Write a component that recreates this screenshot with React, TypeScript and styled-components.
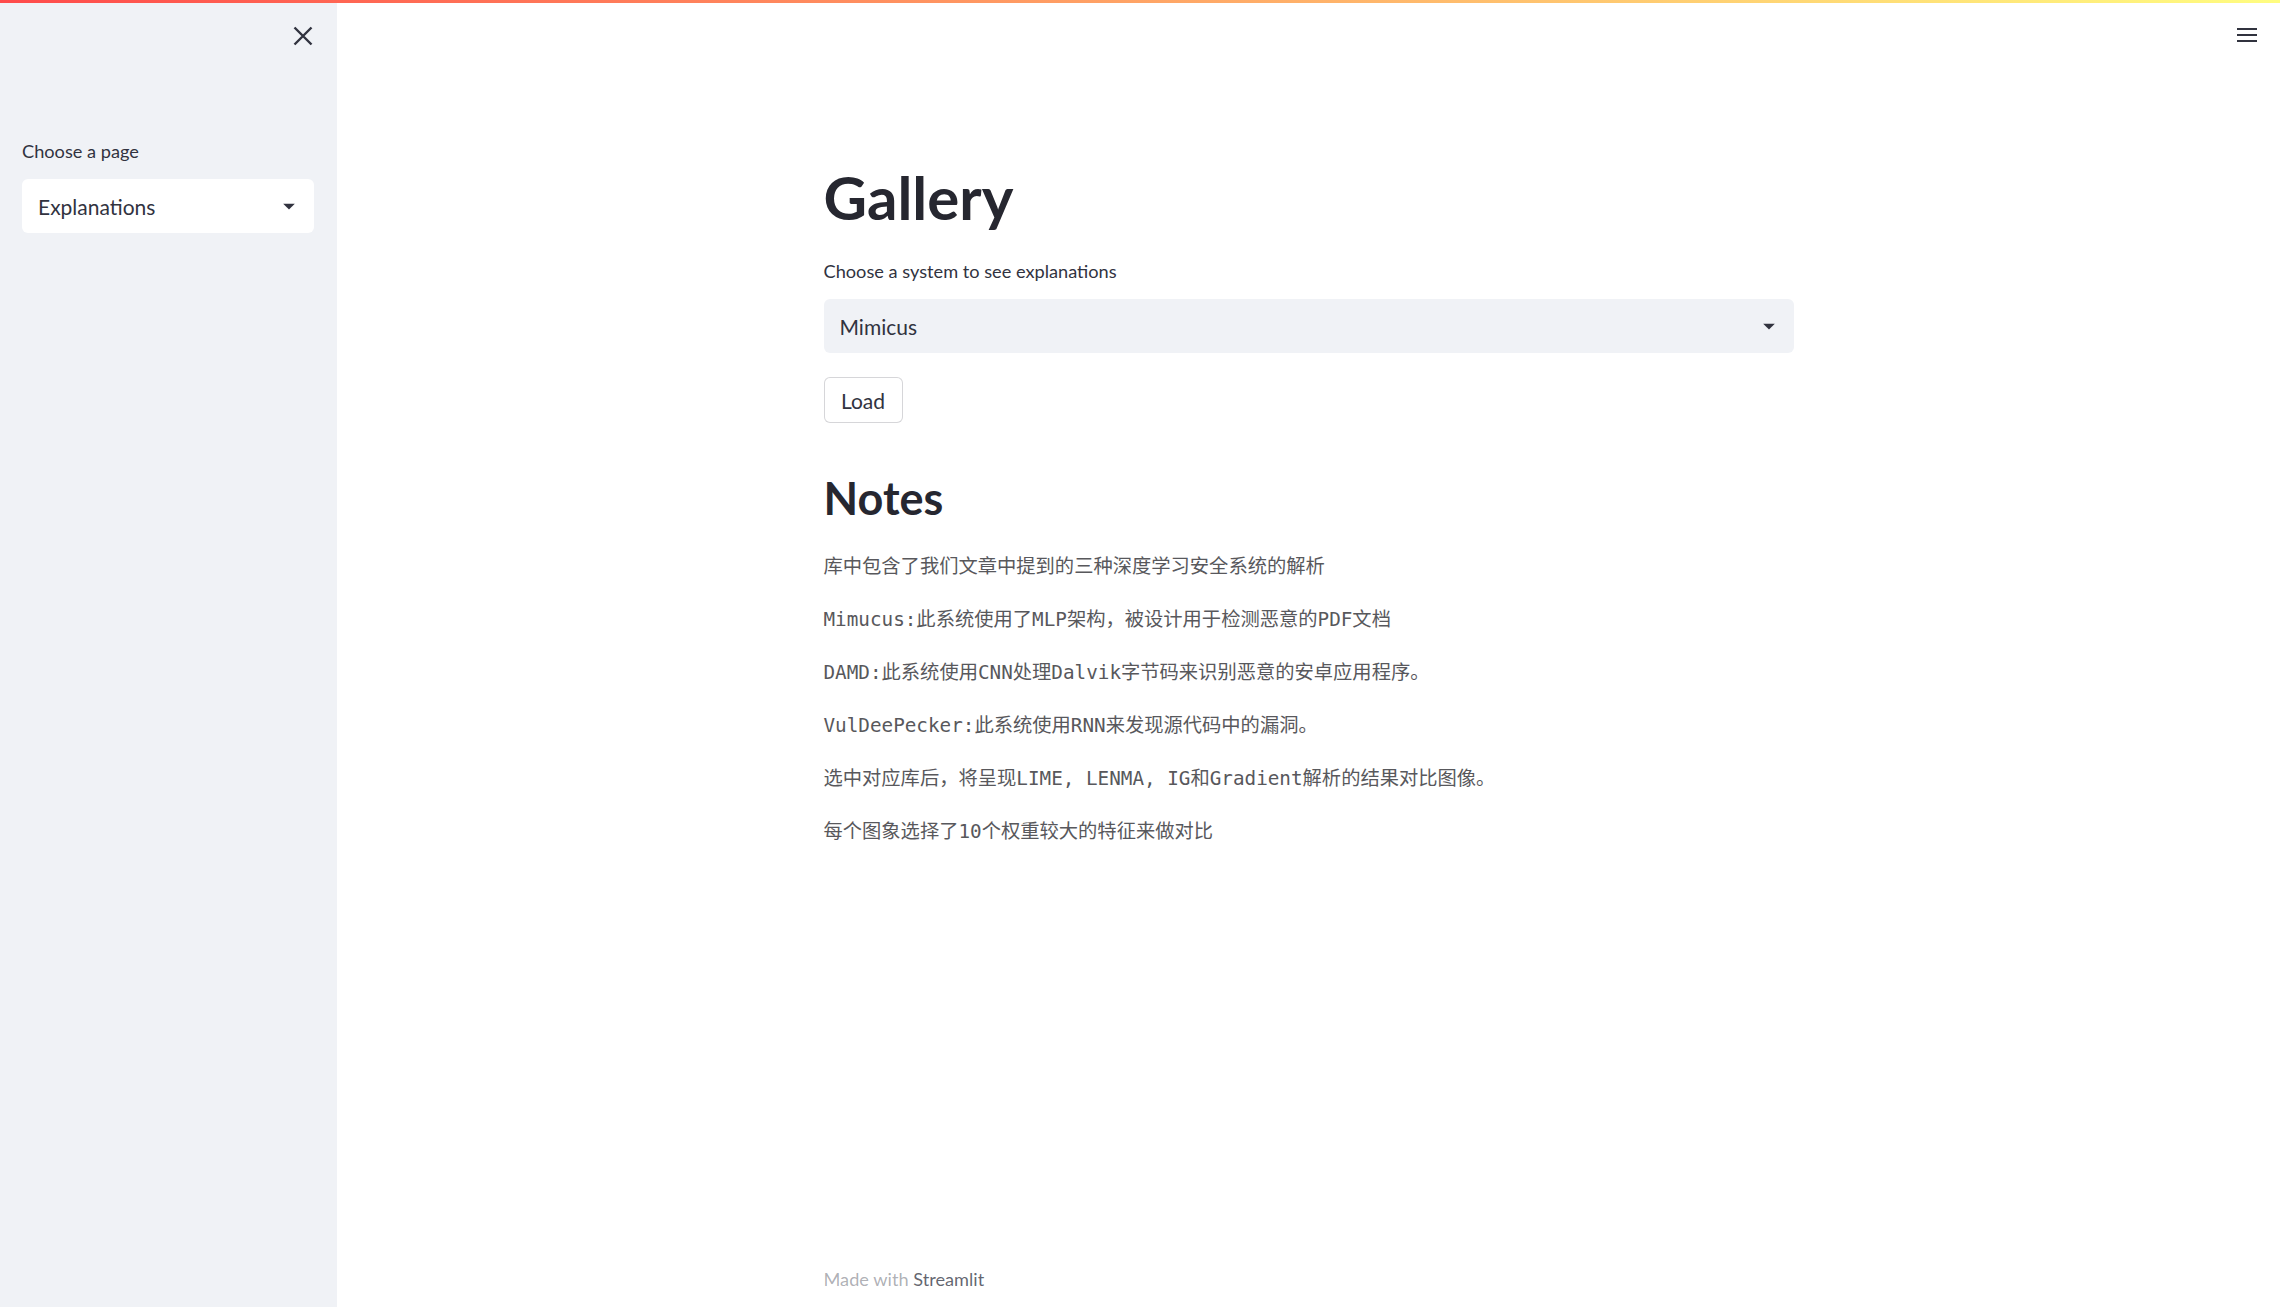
import React from "react";
import styled, { createGlobalStyle } from "styled-components";

const GlobalStyle = createGlobalStyle`
  html, body {
    margin: 0;
    padding: 0;
    background: #ffffff;
  }
  body {
    font-family: Lato, "Noto Sans", sans-serif;
    color: rgb(49, 51, 63);
  }
  * { box-sizing: border-box; }
`;

const Page = styled.div`
  display: flex;
  min-height: 100vh;
  height: 1307px;
  position: relative;
`;

const Decoration = styled.div`
  position: absolute;
  top: 0;
  left: 0;
  right: 0;
  height: 3px;
  background: linear-gradient(90deg, rgb(255, 75, 75), rgb(255, 253, 128));
  z-index: 5;
`;

const Sidebar = styled.aside`
  width: 337px;
  flex: 0 0 337px;
  background: #f0f2f6;
  display: flex;
  flex-direction: column;
  padding: 0 23px 0 22px;
`;

const CloseRow = styled.div`
  display: flex;
  justify-content: flex-end;
  padding: 19px 0 0 0;
  margin-right: -6px;
`;

const IconButton = styled.button`
  border: none;
  background: transparent;
  padding: 0;
  width: 34px;
  height: 34px;
  display: flex;
  align-items: center;
  justify-content: center;
  color: rgb(49, 51, 63);
  cursor: pointer;
`;

const Label = styled.div<{ $top: number }>`
  font-family: Lato, "Noto Sans", sans-serif;
  font-size: 18.2px;
  line-height: 28px;
  color: rgb(49, 51, 63);
  margin-top: ${(p) => p.$top}px;
  margin-bottom: 14px;
`;

const Select = styled.div<{ $light?: boolean }>`
  height: 54px;
  border-radius: 6px;
  background: ${(p) => (p.$light ? "#ffffff" : "#f0f2f6")};
  display: flex;
  align-items: center;
  justify-content: space-between;
  padding: 0 11px 0 16px;
  font-family: Lato, "Noto Sans", sans-serif;
  font-size: 21px;
  color: rgb(49, 51, 63);
`;

const Caret = () => (
  <svg width="28" height="28" viewBox="0 0 24 24" fill="rgb(49,51,63)">
    <path d="M7 10l5 5 5-5z" />
  </svg>
);

const Main = styled.main`
  flex: 1;
  display: flex;
  flex-direction: column;
  align-items: center;
`;

const Header = styled.header`
  align-self: stretch;
  height: 70px;
  display: flex;
  align-items: center;
  justify-content: flex-end;
  padding-right: 23px;
`;

const Content = styled.section`
  width: 970px;
  display: flex;
  flex-direction: column;
  margin-top: 91px;
`;

const Title = styled.h1`
  margin: 0;
  font-family: Lato, "Noto Sans", sans-serif;
  font-weight: 700;
  font-size: 60px;
  line-height: 72px;
  color: rgb(38, 39, 48);
`;

const SubTitle = styled.h2`
  margin: 49px 0 26px 0;
  font-family: Lato, "Noto Sans", sans-serif;
  font-weight: 700;
  font-size: 45px;
  line-height: 53px;
  color: rgb(38, 39, 48);
`;

const Button = styled.button`
  align-self: flex-start;
  margin-top: 24px;
  height: 46px;
  width: 79px;
  border: 1px solid rgba(49, 51, 63, 0.2);
  border-radius: 6px;
  background: #ffffff;
  font-family: Lato, "Noto Sans", sans-serif;
  font-size: 21px;
  color: rgb(49, 51, 63);
  padding: 0;
`;

const Notes = styled.div`
  display: flex;
  flex-direction: column;
  gap: 21px;
`;

const Para = styled.p`
  margin: 0;
  font-family: "DejaVu Sans Mono", "Noto Sans CJK SC", monospace;
  font-size: 19.3px;
  line-height: 32px;
  color: #58585c;
`;

const Footer = styled.footer`
  width: 970px;
  margin-top: auto;
  margin-bottom: 14px;
  font-family: Lato, "Noto Sans", sans-serif;
  font-size: 18.2px;
  line-height: 28px;
  color: rgba(49, 51, 63, 0.4);
`;

const FooterLink = styled.span`
  color: rgba(49, 51, 63, 0.75);
`;

const notes = [
  "库中包含了我们文章中提到的三种深度学习安全系统的解析",
  "Mimucus:此系统使用了MLP架构，被设计用于检测恶意的PDF文档",
  "DAMD:此系统使用CNN处理Dalvik字节码来识别恶意的安卓应用程序。",
  "VulDeePecker:此系统使用RNN来发现源代码中的漏洞。",
  "选中对应库后，将呈现LIME, LENMA, IG和Gradient解析的结果对比图像。",
  "每个图象选择了10个权重较大的特征来做对比",
];

export default function App() {
  return (
    <>
      <GlobalStyle />
      <Page>
        <Decoration />
        <Sidebar>
          <CloseRow>
            <IconButton aria-label="Close sidebar">
              <svg width="34" height="34" viewBox="0 0 24 24" fill="none" stroke="rgb(49,51,63)" strokeWidth="1.7" strokeLinecap="butt">
                <path d="M18 6L6 18M6 6l12 12" />
              </svg>
            </IconButton>
          </CloseRow>
          <Label $top={84}>Choose a page</Label>
          <Select $light>
            <span>Explanations</span>
            <Caret />
          </Select>
        </Sidebar>
        <Main>
          <Header>
            <svg width="20" height="14" viewBox="0 0 20 14" fill="rgb(49,51,63)">
              <rect x="0" y="0" width="20" height="2" />
              <rect x="0" y="6" width="20" height="2" />
              <rect x="0" y="12" width="20" height="2" />
            </svg>
          </Header>
          <Content>
            <Title>Gallery</Title>
            <Label $top={24}>Choose a system to see explanations</Label>
            <Select>
              <span>Mimicus</span>
              <Caret />
            </Select>
            <Button>Load</Button>
            <SubTitle>Notes</SubTitle>
            <Notes>
              {notes.map((n) => (
                <Para key={n}>{n}</Para>
              ))}
            </Notes>
          </Content>
          <Footer>
            Made with <FooterLink>Streamlit</FooterLink>
          </Footer>
        </Main>
      </Page>
    </>
  );
}
